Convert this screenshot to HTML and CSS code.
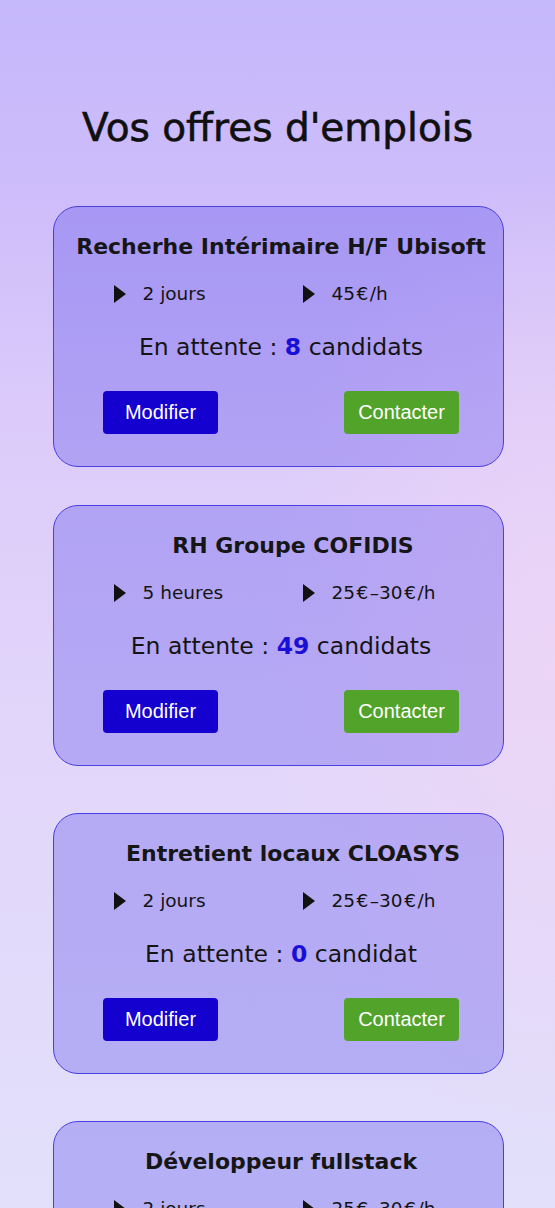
FILE: index.html
```html
<!DOCTYPE html>
<html lang="fr">
<head>
<meta charset="utf-8">
<title>Vos offres d'emplois</title>
<link rel="stylesheet" href="styles.css">
</head>
<body>
<main class="page">
  <h1 class="page-title">Vos offres d'emplois</h1>
  <section class="offer-list">
    <article class="card">
      <h2 class="card-title">Recherhe Intérimaire H/F Ubisoft</h2>
      <ul class="meta">
        <li class="meta-item"><span class="arrow"></span>2 jours</li>
        <li class="meta-item"><span class="arrow"></span>45<span class="euro">€</span>/h</li>
      </ul>
      <p class="waiting">En attente : <span class="count">8</span> candidats</p>
      <div class="actions">
        <button class="btn btn-edit">Modifier</button>
        <button class="btn btn-contact">Contacter</button>
      </div>
    </article>
    <article class="card">
      <h2 class="card-title card-title--shift">RH Groupe COFIDIS</h2>
      <ul class="meta">
        <li class="meta-item"><span class="arrow"></span>5 heures</li>
        <li class="meta-item"><span class="arrow"></span>25<span class="euro">€</span>–30<span class="euro">€</span>/h</li>
      </ul>
      <p class="waiting">En attente : <span class="count">49</span> candidats</p>
      <div class="actions">
        <button class="btn btn-edit">Modifier</button>
        <button class="btn btn-contact">Contacter</button>
      </div>
    </article>
    <article class="card">
      <h2 class="card-title card-title--shift">Entretient locaux CLOASYS</h2>
      <ul class="meta">
        <li class="meta-item"><span class="arrow"></span>2 jours</li>
        <li class="meta-item"><span class="arrow"></span>25<span class="euro">€</span>–30<span class="euro">€</span>/h</li>
      </ul>
      <p class="waiting">En attente : <span class="count">0</span> candidat</p>
      <div class="actions">
        <button class="btn btn-edit">Modifier</button>
        <button class="btn btn-contact">Contacter</button>
      </div>
    </article>
    <article class="card">
      <h2 class="card-title">Développeur fullstack</h2>
      <ul class="meta">
        <li class="meta-item"><span class="arrow"></span>2 jours</li>
        <li class="meta-item"><span class="arrow"></span>25<span class="euro">€</span>–30<span class="euro">€</span>/h</li>
      </ul>
      <p class="waiting">En attente : <span class="count">3</span> candidats</p>
      <div class="actions">
        <button class="btn btn-edit">Modifier</button>
        <button class="btn btn-contact">Contacter</button>
      </div>
    </article>
  </section>
</main>
</body>
</html>
```

FILE: styles.css
```css
html, body {
  margin: 0;
  padding: 0;
}

body {
  font-family: "DejaVu Sans", "Noto Sans", sans-serif;
  color: #141414;
  background:
    radial-gradient(ellipse 420px 700px at 100% 55%, rgba(240, 214, 246, 0.75), rgba(240, 214, 246, 0) 70%),
    linear-gradient(180deg, #c5b8fb 0%, #cdbcfa 15%, #dccbfa 35%, #e2d6fa 60%, #e2e0fb 100%);
  background-attachment: fixed;
  min-height: 100vh;
}

.page {
  display: flex;
  flex-direction: column;
  align-items: center;
  padding-top: 105px;
}

.page-title {
  margin: 0 0 55px;
  font-size: 39px;
  line-height: 46px;
  font-weight: 400;
  color: #101010;
  -webkit-text-stroke: 0.6px #101010;
  text-align: center;
}

.offer-list {
  display: flex;
  flex-direction: column;
  width: 451px;
  margin-left: 1px;
}

.card {
  box-sizing: border-box;
  width: 451px;
  height: 261px;
  margin-bottom: 47px;
  padding: 26px 16px 0 22px;
  border: 1px solid #4a3fe0;
  border-radius: 25px;
  background: rgba(80, 68, 232, 0.31);
  display: flex;
  flex-direction: column;
}

.card:first-child {
  margin-bottom: 38px;
}

.card-title {
  margin: 0;
  font-size: 22px;
  line-height: 28px;
  font-weight: 600;
  color: #161616;
  text-align: center;
  white-space: nowrap;
}

.card-title--shift {
  padding-left: 24px;
}

.meta {
  list-style: none;
  margin: 22px 0 0;
  padding: 0 0 0 38px;
  display: grid;
  grid-template-columns: 189px 1fr;
}

.meta-item {
  display: flex;
  align-items: center;
  font-size: 18.5px;
  line-height: 22px;
}

.euro {
  padding: 0 1.5px;
}

.arrow {
  flex: none;
  width: 0;
  height: 0;
  margin-right: 17px;
  border-left: 12px solid #111;
  border-top: 9.5px solid transparent;
  border-bottom: 9.5px solid transparent;
}

.waiting {
  margin: 28px 0 0;
  font-size: 23.5px;
  line-height: 28px;
  text-align: center;
}

.count {
  color: #1a0fd6;
  font-weight: 600;
}

.actions {
  margin-top: 30px;
  display: flex;
  justify-content: center;
  gap: 126px;
}

.btn {
  width: 115px;
  height: 43px;
  border: none;
  border-radius: 4px;
  color: #ffffff;
  font-family: "Liberation Sans", Arial, sans-serif;
  font-size: 20px;
  padding: 0;
  cursor: pointer;
}

.btn-edit {
  background: #1400cf;
}

.btn-contact {
  background: #52a32a;
}
```
